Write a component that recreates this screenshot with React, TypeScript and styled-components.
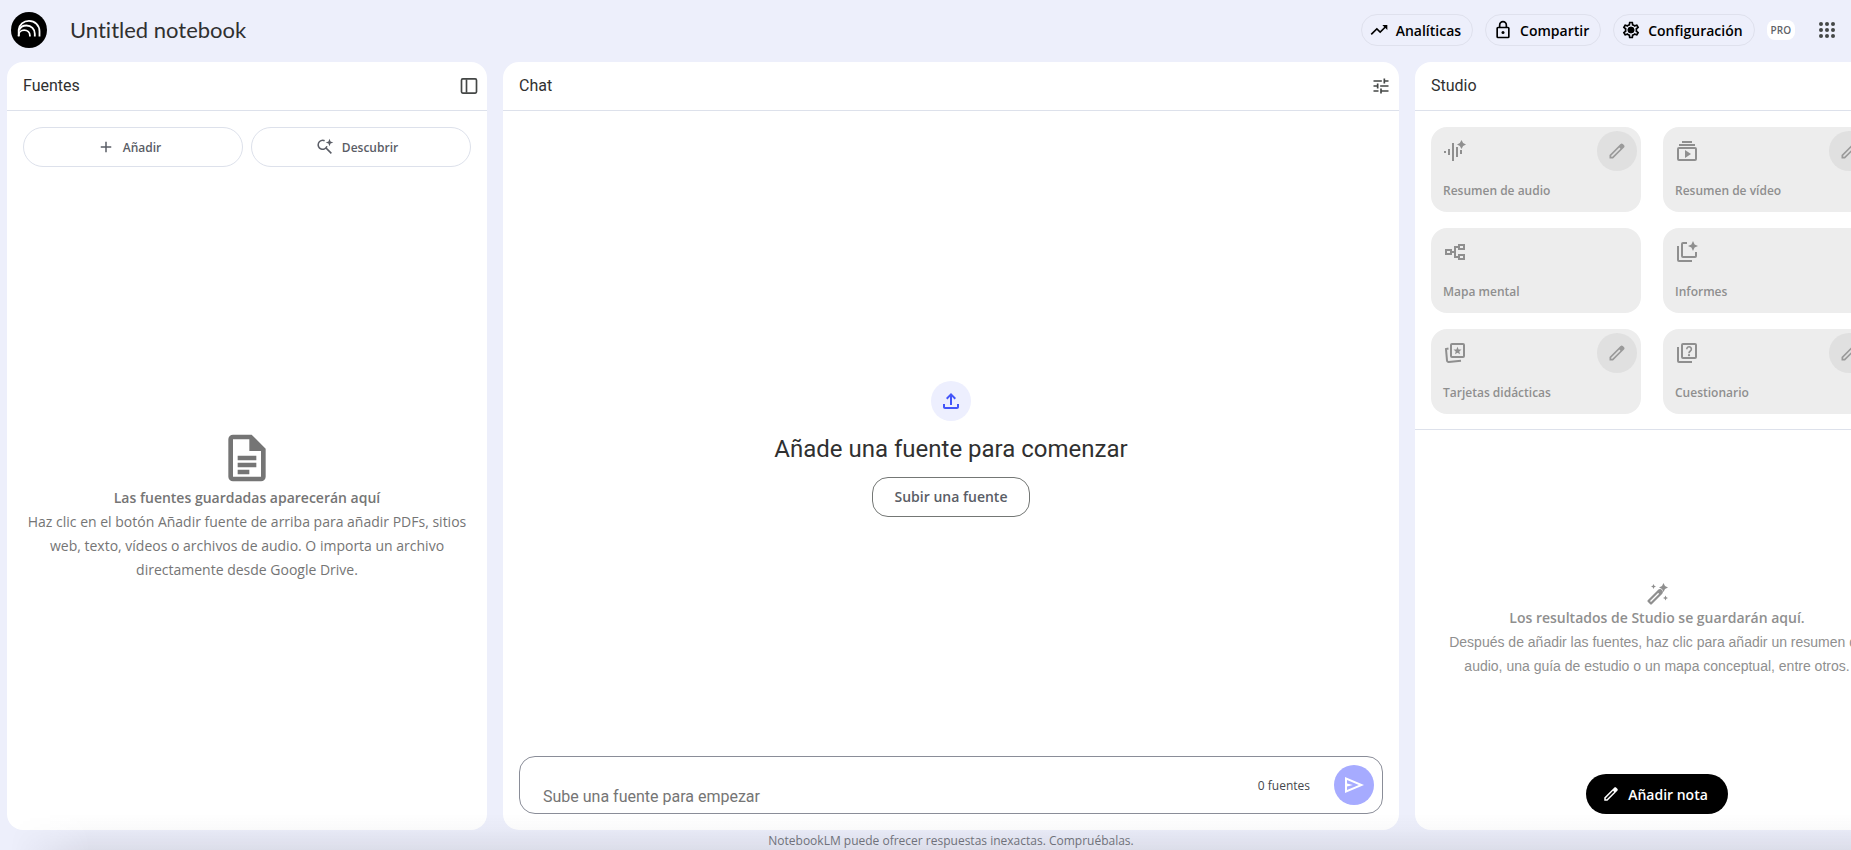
import React from 'react';
import styled, { createGlobalStyle } from 'styled-components';
import { MdAdd, MdTrendingUp, MdTune, MdOutlineFileUpload, MdOutlineSettings } from 'react-icons/md';

const textFont = '"Open Sans", "Noto Sans", sans-serif';
const titleFont = 'Roboto, "Open Sans", sans-serif';
const brandFont = 'Lato, "Open Sans", sans-serif';
const narrowFont = '"Liberation Sans", Arial, sans-serif';

const GlobalStyle = createGlobalStyle`
  *, *::before, *::after { box-sizing: border-box; }
  body { margin: 0; background: #edeffb; font-family: ${textFont}; color: #303030; }
  button, input { font-family: inherit; margin: 0; }
  h1, h2, h3, p { margin: 0; }
  svg { display: block; flex: none; }
`;

const Page = styled.div`
  position: relative;
  display: flex;
  flex-direction: column;
  min-height: 100vh;
  overflow: hidden;
`;

const Header = styled.header`
  display: flex;
  align-items: center;
  height: 62px;
  padding: 0 12px 2px 11px;
`;

const NotebookTitle = styled.h1`
  flex: 1;
  margin-left: 23px;
  font: 400 22px/32px ${brandFont};
  font-variant-ligatures: none;
  color: #303030;
`;

const Actions = styled.div`
  display: flex;
  align-items: center;
  gap: 12px;
`;

const Pill = styled.button`
  display: flex;
  align-items: center;
  gap: 7px;
  height: 32px;
  padding: 0 11px 0 7px;
  border: 1px solid #dfe1ed;
  border-radius: 16px;
  background: transparent;
  color: #000;
  font-size: 14px;
  font-weight: 600;
`;

const Plan = styled.span`
  padding: 0 4px;
  border-radius: 8px;
  background: #fff;
  color: #5f6368;
  font-size: 10px;
  font-weight: 600;
  line-height: 20px;
`;

const AppsButton = styled.button`
  margin-left: 8px;
  padding: 0;
  border: 0;
  background: none;
  color: #444746;
`;

const Workspace = styled.main`
  flex: 1;
  display: grid;
  grid-template-columns: 480px minmax(0, 1fr) 484px;
  gap: 16px;
  width: calc(100% + 48px);
  padding-left: 7px;
`;

const Panel = styled.section`
  display: flex;
  flex-direction: column;
  border-radius: 16px;
  background: #fff;
`;

const PanelHeader = styled.div`
  display: flex;
  align-items: center;
  justify-content: space-between;
  height: 49px;
  padding: 0 8px 0 16px;
  border-bottom: 1px solid #dde1eb;
`;

const PanelTitle = styled.h2`
  font: 400 16px/24px ${titleFont};
`;

const IconButton = styled.button`
  padding: 0;
  border: 0;
  background: none;
  color: #444746;
`;

const SourceActions = styled.div`
  display: grid;
  grid-template-columns: 1fr 1fr;
  gap: 8px;
  padding: 16px 16px 14px;
`;

const SourceButton = styled.button`
  display: flex;
  align-items: center;
  justify-content: center;
  gap: 8px;
  height: 40px;
  padding: 0 8px 0 0;
  border: 1px solid #dde1eb;
  border-radius: 20px;
  background: #fff;
  color: #5a5d66;
  font-size: 12px;
  font-weight: 600;
`;

const EmptyState = styled.div<{ $color: string; $top?: number }>`
  flex: 1;
  display: flex;
  flex-direction: column;
  align-items: center;
  justify-content: center;
  padding: ${({ $top = 0 }) => $top}px 16px 0;
  color: ${({ $color }) => $color};
  text-align: center;
`;

const EmptyTitle = styled.h3`
  font-size: 14px;
  font-weight: 600;
  line-height: 24px;
`;

const EmptyText = styled.p<{ $font?: string }>`
  font: 400 14px/24px ${({ $font = textFont }) => $font};
`;

const Welcome = styled.div`
  flex: 1;
  display: flex;
  flex-direction: column;
  align-items: center;
  justify-content: center;
  gap: 12px;
  padding-top: 30px;
`;

const UploadBadge = styled.div`
  display: grid;
  place-items: center;
  width: 40px;
  height: 40px;
  border-radius: 50%;
  background: #edeffe;
  color: #4355f9;
`;

const WelcomeTitle = styled.h3`
  font: 400 24px/32px ${titleFont};
`;

const UploadButton = styled.button`
  height: 40px;
  padding: 0 22px;
  border: 1px solid #747775;
  border-radius: 16px;
  background: #fff;
  color: #5a5d66;
  font-size: 14px;
  font-weight: 600;
`;

const Composer = styled.form`
  display: flex;
  align-items: center;
  gap: 24px;
  height: 58px;
  margin: 0 16px 16px;
  padding: 0 8px 0 23px;
  border: 1px solid #8a8d98;
  border-radius: 16px;
`;

const Query = styled.input`
  flex: 1;
  align-self: flex-end;
  height: 24px;
  margin-bottom: 4px;
  padding: 0;
  border: 0;
  outline: 0;
  background: none;
  font: 400 16px/24px ${titleFont};
  &::placeholder { color: #757575; opacity: 1; }
`;

const SourceCount = styled.span`
  font-size: 12px;
  color: #45474d;
`;

const SendButton = styled.button`
  display: grid;
  place-items: center;
  width: 40px;
  height: 40px;
  padding: 0;
  border: 0;
  border-radius: 50%;
  background: #a6abff;
  color: #fff;
`;

const ToolGrid = styled.div`
  display: grid;
  grid-template-columns: 1fr 1fr;
  gap: 16px 22px;
  padding: 16px 26px 15px 16px;
  border-bottom: 1px solid #dde1eb;
`;

const ToolCard = styled.div`
  display: flex;
  flex-direction: column;
  justify-content: space-between;
  height: 85px;
  padding: 4px 4px 11px 12px;
  border-radius: 16px;
  background: #ededed;
  color: #8f8f8f;
`;

const ToolTop = styled.div`
  display: flex;
  align-items: center;
  justify-content: space-between;
  height: 40px;
`;

const ToolName = styled.button`
  align-self: flex-start;
  padding: 0;
  border: 0;
  background: none;
  color: inherit;
  font-size: 12px;
  font-weight: 600;
  line-height: 20px;
`;

const EditButton = styled.button`
  display: grid;
  place-items: center;
  width: 40px;
  height: 40px;
  padding: 0;
  border: 0;
  border-radius: 50%;
  background: #e0e0e0;
  color: #9a9a9a;
`;

const NoteButton = styled.button`
  align-self: center;
  display: flex;
  align-items: center;
  gap: 8px;
  height: 40px;
  margin-bottom: 16px;
  padding: 0 20px 0 16px;
  border: 0;
  border-radius: 20px;
  background: #000;
  color: #fff;
  font-size: 14px;
  font-weight: 600;
`;

const Disclaimer = styled.footer`
  padding: 3px 0 1px 51px;
  color: #757780;
  font-size: 12px;
  line-height: 16px;
  text-align: center;
`;

const BottomShade = styled.div`
  position: absolute;
  inset: auto 0 0 0;
  height: 36px;
  pointer-events: none;
  background: linear-gradient(to top, rgba(20, 20, 30, 0.08), rgba(20, 20, 30, 0.02) 60%, transparent);
  mask-image: linear-gradient(to right, transparent 10px, #000 90px);
`;

type IconProps = { size?: number; children: React.ReactNode };
const Icon = ({ size = 24, children }: IconProps) => (
  <svg width={size} height={size} viewBox="0 0 24 24" fill="currentColor" aria-hidden="true">{children}</svg>
);
const line = { fill: 'none', stroke: 'currentColor', strokeWidth: 2 };

const Logo = () => (
  <svg width="36" height="36" viewBox="0 0 36 36" role="img" aria-label="NotebookLM">
    <circle cx="18" cy="18" r="18" />
    <g fill="none" stroke="#fff" strokeWidth="1.8">
      <path d="M7.7 24.6V17.8C8.2 12.6 12.6 8.9 18 8.9c6 0 10.5 4.6 10.5 10.4v5.3" />
      <path d="M7.9 18.4c1.2-3.1 4-4.9 7.6-4.9 4.8 0 8.3 3.6 8.3 8.2v2.9" />
      <path d="M7.7 24v-.8c0-3 2.4-5 5.5-5 3.2 0 5.7 2.3 5.7 5.4v1" />
    </g>
  </svg>
);

const LockIcon = () => (
  <Icon size={20}>
    <rect x="5" y="9" width="14" height="12" rx="1" {...line} />
    <path d="M8 9V6a4 4 0 0 1 8 0v3" {...line} />
    <circle cx="12" cy="15" r="1.8" />
  </Icon>
);

const GearIcon = () => (
  <Icon size={20}>
    <MdOutlineSettings size={24} />
    <circle cx="12" cy="12" r="4" />
  </Icon>
);

const AppsIcon = () => (
  <Icon>
    {[6, 12, 18].map((y) => [6, 12, 18].map((x) => <circle key={`${x}-${y}`} cx={x} cy={y} r="2" />))}
  </Icon>
);

const SidePanelIcon = () => (
  <Icon size={20}>
    <rect x="3" y="3.5" width="18" height="17" rx="1.5" {...line} />
    <path d="M9 4v16" {...line} />
  </Icon>
);

const SearchSparkIcon = () => (
  <Icon size={18}>
    <path d="M11.5 3.7A6 6 0 1 0 14.6 11M13.5 13.5 20.5 20.5" {...line} />
    <path d="m18 1 1.4 3.6L23 6l-3.6 1.4L18 11l-1.4-3.6L13 6l3.6-1.4z" />
  </Icon>
);

const PencilIcon = ({ size = 20 }: { size?: number }) => (
  <Icon size={size}>
    <path fillRule="evenodd" d="M3 21v-4.25L16.2 3.575q.3-.275.663-.425t.762-.15.775.15.65.45L20.425 5q.3.275.438.65T21 6.4q0 .4-.137.763t-.438.662L7.25 21zM5 19h1.425L16.2 9.225 14.775 7.8 5 17.575z" />
  </Icon>
);

const DocumentIcon = () => (
  <Icon size={56}>
    <path fillRule="evenodd" d="M6 2h8l6 6v12a2 2 0 0 1-2 2H6a2 2 0 0 1-2-2V4a2 2 0 0 1 2-2zM6 4v16h12V9h-5V4zM8 11h8v2H8zM8 14h8v2H8zM8 17h5v2H8z" />
  </Icon>
);

const AudioIcon = () => (
  <Icon>
    <path d="M1 12h2v2H1zM5 10h2v6H5zM9 4h2v18H9zM13 8h2v10h-2zM17 11h2v4h-2z" />
    <path d="m18.5 1 1.6 2.9L23 5.5l-2.9 1.6-1.6 2.9-1.6-2.9L14 5.5l2.9-1.6z" />
  </Icon>
);

const VideoIcon = () => (
  <Icon>
    <rect x="3" y="9" width="18" height="12" rx="1" {...line} />
    <path d="M4 5h16v2H4zM7 2h10v2H7zM10 11v8l6-4z" />
  </Icon>
);

const MindMapIcon = () => (
  <Icon>
    <path d="M3 10h5v4H3zM16 5h5v4h-5zM16 15h5v4h-5zM8 12h4M16 7h-4v10h4" {...line} />
  </Icon>
);

const ReportIcon = () => (
  <Icon>
    <path d="M3 6v14a1 1 0 0 0 1 1h13M12 3H8a1 1 0 0 0-1 1v12a1 1 0 0 0 1 1h12a1 1 0 0 0 1-1v-4" {...line} />
    <path d="m18 1 1.6 3.4L23 6l-3.4 1.6L18 11l-1.6-3.4L13 6l3.4-1.6z" />
  </Icon>
);

const CardsIcon = () => (
  <Icon>
    <rect x="8" y="3" width="13" height="13" rx="1" {...line} />
    <path d="M5.5 7.5 3 8l1 11.5a1.5 1.5 0 0 0 1.7 1.4L18 19.7" {...line} />
    <path d="m14.5 5.7 1.1 2.7 2.9.2-2.2 1.9.7 2.8-2.5-1.5-2.5 1.5.7-2.8-2.2-1.9 2.9-.2z" />
  </Icon>
);

const QuizIcon = () => (
  <Icon>
    <path d="M3 6v14a1 1 0 0 0 1 1h13" {...line} />
    <rect x="7" y="3" width="14" height="14" rx="1" {...line} />
    <path d="M11.8 8.2a2.3 2.3 0 1 1 3.7 1.7c-.9.7-1.5 1.1-1.5 2.3" {...line} strokeWidth={1.6} />
    <circle cx="14" cy="14.2" r="1.1" />
  </Icon>
);

const WandIcon = () => (
  <Icon>
    <path d="m3.500 19 10.500-10.500a1.800 1.800 0 0 1 2.500 2.500L6 21.500z" {...line} strokeWidth={2.2} strokeLinejoin="round" />
    <path d="m12 9.500 2.500-2 3 3-2.500 2.500z" />
    <path d="m18.500 1 1.500 3L23 5.500l-3 1.500-1.500 3-1.500-3L14 5.500l3-1.500zM8.500 2l.8 1.700 1.700.8-1.700.8L8.500 7l-.8-1.700L6 4.500l1.700-.8zM20.500 13.500l.8 1.700 1.700.8-1.700.8-.8 1.700-.8-1.700L18 16l1.700-.8z" />
  </Icon>
);

const SendIcon = () => (
  <Icon>
    <path fillRule="evenodd" d="M3 20V4l19 8zM5 17l11.850-5L5 7v3.500l6 1.500-6 1.500z" />
  </Icon>
);

const tools = [
  { name: 'Resumen de audio', icon: <AudioIcon />, editable: true },
  { name: 'Resumen de vídeo', icon: <VideoIcon />, editable: true },
  { name: 'Mapa mental', icon: <MindMapIcon />, editable: false },
  { name: 'Informes', icon: <ReportIcon />, editable: false },
  { name: 'Tarjetas didácticas', icon: <CardsIcon />, editable: true },
  { name: 'Cuestionario', icon: <QuizIcon />, editable: true },
];

export default function App() {
  return (
    <Page>
      <GlobalStyle />
      <Header>
        <Logo />
        <NotebookTitle>Untitled notebook</NotebookTitle>
        <Actions>
          <Pill type="button"><MdTrendingUp size={20} />Analíticas</Pill>
          <Pill type="button"><LockIcon />Compartir</Pill>
          <Pill type="button"><GearIcon />Configuración</Pill>
          <Plan>PRO</Plan>
          <AppsButton type="button" aria-label="Aplicaciones de Google"><AppsIcon /></AppsButton>
        </Actions>
      </Header>

      <Workspace>
        <Panel>
          <PanelHeader>
            <PanelTitle>Fuentes</PanelTitle>
            <IconButton type="button" aria-label="Contraer panel"><SidePanelIcon /></IconButton>
          </PanelHeader>
          <SourceActions>
            <SourceButton type="button"><MdAdd size={18} />Añadir</SourceButton>
            <SourceButton type="button"><SearchSparkIcon />Descubrir</SourceButton>
          </SourceActions>
          <EmptyState $color="#757575">
            <DocumentIcon />
            <EmptyTitle>Las fuentes guardadas aparecerán aquí</EmptyTitle>
            <EmptyText>
              Haz clic en el botón Añadir fuente de arriba para añadir PDFs, sitios web, texto, vídeos o
              archivos de audio. O importa un archivo directamente desde Google Drive.
            </EmptyText>
          </EmptyState>
        </Panel>

        <Panel>
          <PanelHeader>
            <PanelTitle>Chat</PanelTitle>
            <IconButton type="button" aria-label="Configurar chat"><MdTune size={20} /></IconButton>
          </PanelHeader>
          <Welcome>
            <UploadBadge><MdOutlineFileUpload size={24} /></UploadBadge>
            <WelcomeTitle>Añade una fuente para comenzar</WelcomeTitle>
            <UploadButton type="button">Subir una fuente</UploadButton>
          </Welcome>
          <Composer onSubmit={(event) => event.preventDefault()}>
            <Query type="text" aria-label="Consulta" placeholder="Sube una fuente para empezar" />
            <SourceCount>0 fuentes</SourceCount>
            <SendButton type="submit" aria-label="Enviar"><SendIcon /></SendButton>
          </Composer>
        </Panel>

        <Panel>
          <PanelHeader>
            <PanelTitle>Studio</PanelTitle>
          </PanelHeader>
          <ToolGrid>
            {tools.map(({ name, icon, editable }) => (
              <ToolCard key={name}>
                <ToolTop>
                  {icon}
                  {editable && (
                    <EditButton type="button" disabled aria-label={`Personalizar ${name}`}><PencilIcon /></EditButton>
                  )}
                </ToolTop>
                <ToolName type="button" disabled>{name}</ToolName>
              </ToolCard>
            ))}
          </ToolGrid>
          <EmptyState $color="#8f8f8f" $top={56}>
            <WandIcon />
            <EmptyTitle>Los resultados de Studio se guardarán aquí.</EmptyTitle>
            <EmptyText $font={narrowFont}>
              Después de añadir las fuentes, haz clic para añadir un resumen de audio, una guía de estudio
              o un mapa conceptual, entre otros.
            </EmptyText>
          </EmptyState>
          <NoteButton type="button"><PencilIcon size={18} />Añadir nota</NoteButton>
        </Panel>
      </Workspace>
      <Disclaimer>NotebookLM puede ofrecer respuestas inexactas. Compruébalas.</Disclaimer>
      <BottomShade />
    </Page>
  );
}
